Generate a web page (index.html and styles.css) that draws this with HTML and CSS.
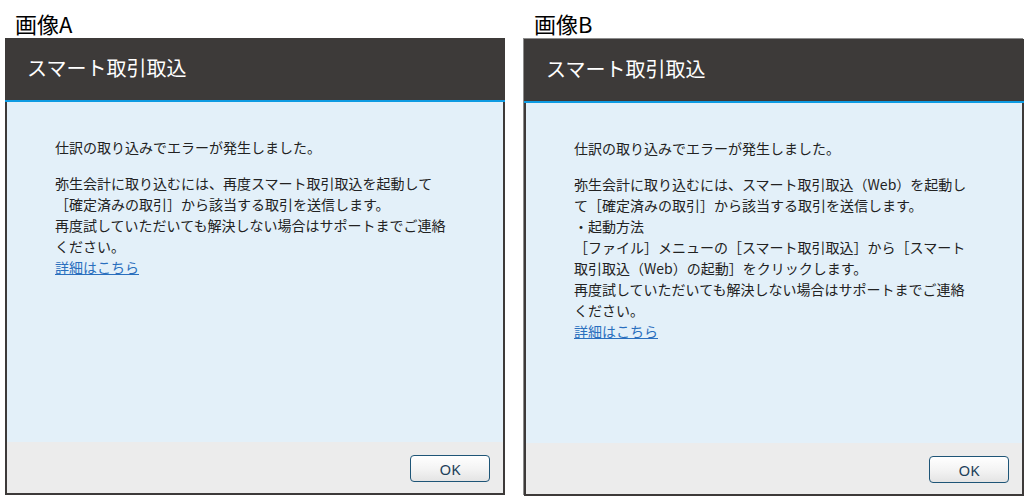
FILE: index.html
```html
<!DOCTYPE html>
<html lang="ja">
<head>
    <meta charset="UTF-8">
    <meta name="viewport" content="width=device-width, initial-scale=1.0">
    <title>スマート取引取込</title>
    <link rel="stylesheet" href="styles.css">
</head>
<body>
    <main class="compare">
        <section class="column">
            <h2 class="label">画像A</h2>
            <div class="dialog">
                <header class="dialog-title">スマート取引取込</header>
                <div class="dialog-body">
                    <p>仕訳の取り込みでエラーが発生しました。</p>
                    <p>弥生会計に取り込むには、再度スマート取引取込を起動して<br>［確定済みの取引］から該当する取引を送信します。<br>再度試していただいても解決しない場合はサポートまでご連絡<br>ください。<br><a href="#" class="more">詳細はこちら</a></p>
                </div>
                <footer class="dialog-footer">
                    <button type="button" class="ok-button">OK</button>
                </footer>
            </div>
        </section>
        <section class="column column-b">
            <h2 class="label">画像B</h2>
            <div class="dialog dialog-b">
                <header class="dialog-title">スマート取引取込</header>
                <div class="dialog-body">
                    <p>仕訳の取り込みでエラーが発生しました。</p>
                    <p>弥生会計に取り込むには、スマート取引取込（Web）を起動し<br>て［確定済みの取引］から該当する取引を送信します。<br>・起動方法<br>［ファイル］メニューの［スマート取引取込］から［スマート<br>取引取込（Web）の起動］をクリックします。<br>再度試していただいても解決しない場合はサポートまでご連絡<br>ください。<br><a href="#" class="more">詳細はこちら</a></p>
                </div>
                <footer class="dialog-footer">
                    <button type="button" class="ok-button">OK</button>
                </footer>
            </div>
        </section>
    </main>
</body>
</html>
```
FILE: styles.css
```css
body {
    margin: 0;
    background: #ffffff;
    font-family: "Noto Sans CJK JP", "Noto Sans", sans-serif;
    color: #222222;
}
.compare {
    display: flex;
    gap: 19px;
    padding-left: 5px;
}
.column {
    width: 500px;
}
.label {
    margin: 0;
    padding: 8px 0 0 10px;
    height: 30px;
    font-size: 22px;
    font-weight: normal;
    line-height: 30px;
    color: #000000;
}
.dialog {
    display: flex;
    flex-direction: column;
    height: 457px;
    box-sizing: border-box;
    border: 2px solid #3d3a39;
    border-top: none;
}
.dialog-b {
    margin-top: 1px;
    box-shadow: -1px -1px 0 #8c8c8c;
}
.dialog-title {
    flex: none;
    height: 64px;
    margin: 0 -2px;
    padding: 0 22px 4px;
    box-sizing: border-box;
    display: flex;
    align-items: center;
    background: #3d3a39;
    border-bottom: 2px solid #0e9be2;
    color: #ffffff;
    font-size: 20px;
}
.dialog-body {
    flex: 1;
    padding: 35px 0 0 48px;
    background: #e3f0f9;
    font-size: 14px;
    line-height: 21px;
}
.dialog-body p {
    margin: 0 0 15px;
    white-space: nowrap;
}
.more {
    color: #2a6fbe;
    text-decoration: underline;
}
.dialog-footer {
    flex: none;
    height: 51px;
    box-sizing: border-box;
    display: flex;
    justify-content: flex-end;
    align-items: flex-start;
    padding: 13px 13px 0 0;
    background: #ececec;
}
.ok-button {
    width: 80px;
    height: 27px;
    padding: 0;
    border: 1px solid #1e5577;
    border-radius: 4px;
    background: linear-gradient(#ffffff, #f4f4f4 50%, #e4e4e4);
    color: #1d3f5a;
    font-family: "Noto Sans", sans-serif;
    font-size: 15px;
}
```
